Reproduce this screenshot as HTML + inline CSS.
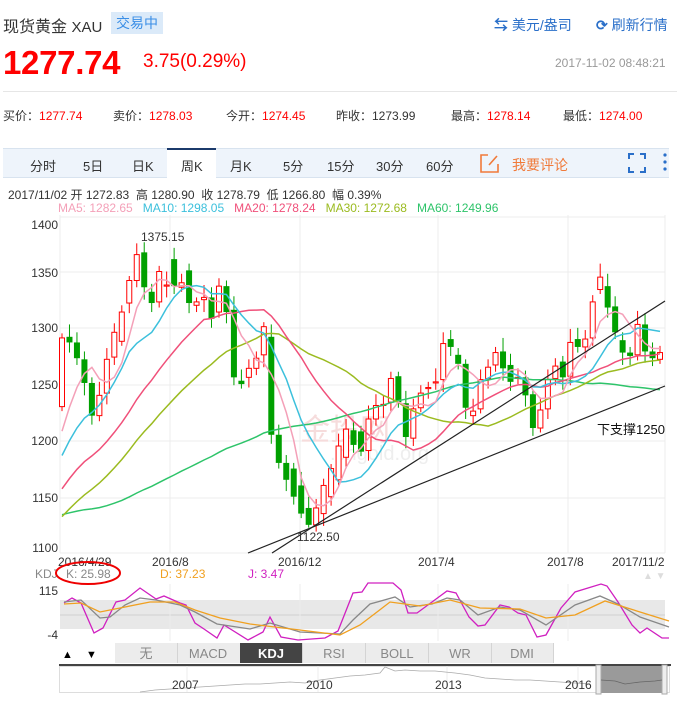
<!DOCTYPE html>
<html><head><meta charset="utf-8">
<style>
*{margin:0;padding:0;box-sizing:border-box}
body{width:680px;height:703px;background:#fff;font-family:"Liberation Sans","Noto Sans CJK SC",sans-serif;position:relative;overflow:hidden;color:#333}
.a{position:absolute;white-space:nowrap}
.r{color:#f00}
</style></head><body>
<div class="a" style="left:3px;top:13px;font-size:16px;color:#333">现货黄金 <span style="font-size:15px">XAU</span></div>
<div class="a" style="left:111px;top:12px;width:52px;height:22px;background:#dbeaf9;color:#3a8ee6;font-size:14px;line-height:22px;text-align:center">交易中</div>
<div class="a" style="left:494px;top:15px;font-size:14px;color:#2a6fc9"><span style="font-weight:bold">⇆</span> 美元/盎司</div>
<div class="a" style="left:596px;top:15px;font-size:14px;color:#2a6fc9"><span style="font-weight:bold">⟳</span> 刷新行情</div>
<div class="a r" style="left:3px;top:44px;font-size:33px;font-weight:bold;letter-spacing:-0.3px">1277.74</div>
<div class="a r" style="left:143px;top:51px;font-size:19px">3.75(0.29%)</div>
<div class="a" style="left:555px;top:56px;font-size:12px;color:#999">2017-11-02 08:48:21</div>
<div class="a" style="left:3px;top:91px;width:674px;height:1px;background:#e6e6e6"></div>
<div class="a" style="left:3px;top:107px;font-size:12px;word-spacing:0">
<span>买价：<span class="r">1277.74</span></span><span style="position:absolute;left:110px">卖价：<span class="r">1278.03</span></span><span style="position:absolute;left:223px">今开：<span class="r">1274.45</span></span><span style="position:absolute;left:333px">昨收：1273.99</span><span style="position:absolute;left:448px">最高：<span class="r">1278.14</span></span><span style="position:absolute;left:560px">最低：<span class="r">1274.00</span></span></div>
<div class="a" style="left:3px;top:148px;width:666px;height:30px;background:#eef4fb;border-top:1px solid #d8e3ef;border-bottom:1px solid #d8e3ef"></div>
<div class="a" style="left:167px;top:148px;width:49px;height:31px;background:#fff;border-top:2px solid #1b3a6b"></div>
<div class="a" style="top:156px;font-size:13px;color:#333;left:0;width:680px;height:20px">
<span class="a" style="left:30px">分时</span><span class="a" style="left:83px">5日</span><span class="a" style="left:132px">日K</span><span class="a" style="left:181px">周K</span><span class="a" style="left:230px">月K</span><span class="a" style="left:283px">5分</span><span class="a" style="left:327px">15分</span><span class="a" style="left:376px">30分</span><span class="a" style="left:426px">60分</span>
<span class="a" style="left:512px;color:#f07a3a;font-size:14px;top:-1px">我要评论</span></div>
<svg class="a" style="left:0;top:0" width="680" height="703">
<g fill="none" stroke="#f07a3a" stroke-width="1.6"><path d="M488 155h-7v17h17v-8"/><path d="M489 165l8-9"/></g>
<g fill="none" stroke="#2a6fc9" stroke-width="2"><path d="M629 159v-5h5M640 154h5v5M645 167v5h-5M634 172h-5v-5"/></g>
<g fill="#2a6fc9"><circle cx="665" cy="155" r="1.6"/><circle cx="665" cy="162" r="1.6"/><circle cx="665" cy="169" r="1.6"/></g>
<g id="grid" stroke="#ececec" stroke-width="1"></g>
<text x="300" y="440" font-size="30" fill="#f6dcdc" font-family="Liberation Sans,Noto Sans CJK SC,sans-serif">金投网</text>
<text x="330" y="460" font-size="20" fill="#eee" font-family="Liberation Sans,sans-serif">.cngold.org</text>
<g id="cd"></g><g id="ma"></g>
<g stroke="#222" stroke-width="1.2"><line x1="272" y1="553" x2="665" y2="301"/><line x1="248" y1="553" x2="665" y2="386"/></g>
<text x="597" y="434" font-size="13" fill="#111" font-family="Liberation Sans,Noto Sans CJK SC,sans-serif">下支撑1250</text>
<text x="141" y="241" font-size="12" fill="#333">1375.15</text>
<text x="297" y="541" font-size="12" fill="#333">1122.50</text>
<g font-size="12" fill="#333" text-anchor="end" font-family="Liberation Sans,sans-serif">
<text x="58" y="229">1400</text><text x="58" y="277">1350</text><text x="58" y="332">1300</text><text x="58" y="389">1250</text><text x="58" y="445">1200</text><text x="58" y="502">1150</text><text x="58" y="552">1100</text></g>
<g font-size="12" fill="#333"><text x="58" y="566">2016/4/29</text><text x="152" y="566">2016/8</text><text x="278" y="566">2016/12</text><text x="418" y="566">2017/4</text><text x="547" y="566">2017/8</text><text x="612" y="566">2017/11/2</text></g>
<g font-size="12"><text x="35" y="578" fill="#888">KDJ</text><text x="66" y="578" fill="#888">K: 25.98</text><text x="160" y="578" fill="#f0a020">D: 37.23</text><text x="248" y="578" fill="#d020c0">J: 3.47</text></g>
<ellipse cx="88" cy="573" rx="32" ry="11" fill="none" stroke="#e00" stroke-width="2"/>
<text x="643" y="579" font-size="10" fill="#ddd">▲ ▼</text>
<rect x="60" y="600" width="605" height="29" fill="#e8e8e8"/>
<line x1="60" y1="615" x2="665" y2="615" stroke="#d0d0d0"/>
<g stroke="#ececec"><line x1="170" y1="584" x2="170" y2="641"/><line x1="300" y1="584" x2="300" y2="641"/><line x1="438" y1="584" x2="438" y2="641"/><line x1="568" y1="584" x2="568" y2="641"/></g>
<g font-size="12" fill="#333" text-anchor="end"><text x="58" y="595">115</text><text x="58" y="639">-4</text></g>
<g fill="none" stroke-width="1.3">
<polyline stroke="#d020c0" points="64,603 72,598 81,603 94,633 103,628 116,602 125,600 140,588 156,599 164,596 180,603 186,605 195,623 204,629 217,638 224,625 248,640 263,632 270,617 281,637 298,640 325,638 338,631 353,593 362,592 368,583 393,583 401,590 408,613 417,613 432,602 447,591 456,593 469,617 478,626 485,625 500,605 509,607 518,613 526,615 537,637 546,635 561,608 575,592 588,588 601,584 607,586 618,602 632,625 640,633 647,628 662,638 669,638"/>
<polyline stroke="#888" points="64,602 81,600 100,618 110,617 125,605 140,598 156,600 180,605 195,612 217,624 250,629 270,623 300,632 340,634 353,620 370,604 395,597 410,607 432,604 447,598 460,600 478,615 500,607 520,610 546,625 575,605 600,596 618,604 640,617 669,627"/>
<polyline stroke="#f0a020" points="64,604 81,603 100,612 125,607 150,602 175,602 195,610 220,618 250,624 300,630 340,635 360,625 390,602 420,606 450,600 480,608 520,609 546,618 575,615 605,601 640,612 669,621"/>
</g>
<rect x="59" y="643" width="13" height="20" fill="#fff"/>
<text x="62" y="658" font-size="11" fill="#000">▲</text><text x="86" y="658" font-size="11" fill="#000">▼</text>
<g font-size="13" text-anchor="middle" font-family="Liberation Sans,Noto Sans CJK SC,sans-serif">
<rect x="115" y="643" width="438" height="20" fill="#ececec"/>
<g stroke="#d4d4d4"><line x1="177.5" y1="643" x2="177.5" y2="663"/><line x1="302.5" y1="643" x2="302.5" y2="663"/><line x1="365.5" y1="643" x2="365.5" y2="663"/><line x1="428.5" y1="643" x2="428.5" y2="663"/><line x1="491.5" y1="643" x2="491.5" y2="663"/><line x1="553.5" y1="643" x2="553.5" y2="663"/></g>
<rect x="240" y="643" width="62" height="20" fill="#444"/>
<text x="146" y="658" fill="#888">无</text><text x="208" y="658" fill="#888">MACD</text><text x="271" y="658" fill="#fff" font-weight="bold">KDJ</text><text x="334" y="658" fill="#888">RSI</text><text x="397" y="658" fill="#888">BOLL</text><text x="460" y="658" fill="#888">WR</text><text x="522" y="658" fill="#888">DMI</text></g>
<rect x="59" y="664" width="612" height="2" fill="#444"/>
<rect x="59.5" y="666.5" width="610" height="26" fill="none" stroke="#ddd"/>
<g stroke="#ececec"><line x1="187" y1="666" x2="187" y2="692"/><line x1="318" y1="666" x2="318" y2="692"/><line x1="447" y1="666" x2="447" y2="692"/><line x1="578" y1="666" x2="578" y2="692"/></g>
<polyline fill="none" stroke="#aaa" stroke-width="0.8" points="140,692 155,690 170,689 185,688 200,687 215,686 230,685 245,684 260,684 275,683 290,682 305,683 320,680 335,678 350,676 365,675 380,673 385,667 395,671 405,670 420,671 435,671 445,672 455,673 470,675 485,678 500,679 515,680 530,680 545,681 560,682 575,683 590,684"/>
<rect x="600" y="666" width="63" height="27" fill="#9a9a9a"/>
<rect x="596" y="665" width="5" height="29" fill="#eee" stroke="#aaa"/><rect x="662" y="665" width="5" height="29" fill="#eee" stroke="#aaa"/>
<polyline fill="none" stroke="#666" stroke-width="0.8" points="601,680 615,681 625,684 640,682 655,681 662,680"/>
<g font-size="12" fill="#333"><text x="172" y="689">2007</text><text x="306" y="689">2010</text><text x="435" y="689">2013</text><text x="565" y="689">2016</text></g>
</svg>
<div class="a" style="left:8px;top:186px;font-size:12px;color:#333">2017/11/02 开 1272.83 &nbsp;高 1280.90 &nbsp;收 1278.79 &nbsp;低 1266.80 &nbsp;幅 0.39%</div>
<div class="a" style="left:58px;top:201px;font-size:12px"><span style="color:#f4a0b8">MA5: 1282.65</span> &nbsp;&nbsp;<span style="color:#3cc0dc">MA10: 1298.05</span> &nbsp;&nbsp;<span style="color:#f0507a">MA20: 1278.24</span> &nbsp;&nbsp;<span style="color:#9bbb20">MA30: 1272.68</span> &nbsp;&nbsp;<span style="color:#2ec46a">MA60: 1249.96</span></div>
<script>
var O=[1230,1292,1287,1272,1251,1222,1242,1274,1288,1322,1342,1367,1332,1323,1337,1361,1336,1351,1320,1325,1327,1314,1337,1316,1253,1256,1264,1276,1292,1205,1180,1175,1160,1140,1125,1135,1150,1165,1185,1209,1208,1191,1219,1231,1234,1257,1233,1202,1229,1246,1251,1254,1290,1276,1268,1222,1228,1255,1267,1279,1267,1255,1256,1241,1211,1228,1255,1270,1257,1290,1283,1291,1334,1337,1319,1289,1278,1276,1303,1279,1272];
var C=[1291,1287,1273,1251,1222,1240,1272,1296,1314,1342,1365,1336,1322,1350,1338,1337,1340,1322,1323,1327,1308,1337,1314,1256,1250,1264,1273,1301,1205,1180,1165,1150,1135,1125,1140,1160,1175,1195,1210,1196,1190,1219,1231,1232,1255,1234,1203,1228,1242,1247,1252,1286,1283,1268,1229,1226,1254,1265,1278,1264,1252,1256,1240,1211,1227,1254,1266,1256,1287,1283,1290,1323,1345,1318,1296,1278,1275,1303,1279,1273,1278];
var n=Math.min(O.length,C.length);
function Y(p){return 553-(p-1100)*1.126}
var s='',g='';
[217,272,328,385,441,498,553].forEach(function(y){g+='<line x1="60" y1="'+y+'" x2="665" y2="'+y+'"/>'});
[170,300,438,568].forEach(function(x){g+='<line x1="'+x+'" y1="215" x2="'+x+'" y2="553"/>'});
g+='<line x1="60" y1="215" x2="60" y2="553"/><line x1="665" y1="215" x2="665" y2="553"/>';
document.getElementById('grid').innerHTML=g;
for(var i=0;i<n;i++){
 var x=62+i*(598/(n-1)),o=O[i],c=C[i],up=c>=o;
 var hi=Math.max(o,c)+4+((i*7)%9),lo=Math.min(o,c)-4-((i*5)%8);
 if(i==10)hi=1375;if(i==33)lo=1122.5;if(i==72)hi=1357;
 var col=up?'#f00':'#00a000';
 s+='<line x1="'+x+'" y1="'+Y(hi)+'" x2="'+x+'" y2="'+Y(lo)+'" stroke="'+col+'"/>';
 var t=Y(Math.max(o,c)),h=Math.max(1,Y(Math.min(o,c))-t);
 if(up)s+='<rect x="'+(x-2.5)+'" y="'+t+'" width="5" height="'+h+'" fill="#fff" stroke="#f00"/>';
 else s+='<rect x="'+(x-3)+'" y="'+t+'" width="6" height="'+h+'" fill="#00a000"/>';
}
document.getElementById('cd').innerHTML=s;
var pad=[];for(var k=0;k<60;k++){pad.push(k<35?1190-k*3.5:1075+(k-35)*5)}
var all=pad.concat(C.slice(0,n));
function ma(L,col){var pts=[];for(var i=0;i<n;i++){var j=i+60,sm=0;for(var q=0;q<L;q++)sm+=all[j-q];pts.push((62+i*(598/(n-1))).toFixed(1)+','+Y(sm/L).toFixed(1))}return '<polyline fill="none" stroke="'+col+'" stroke-width="1.5" points="'+pts.join(' ')+'"/>'}
document.getElementById('ma').innerHTML=ma(60,'#2ec46a')+ma(30,'#9bbb20')+ma(20,'#f0507a')+ma(10,'#3cc0dc')+ma(5,'#f4a0b8');
</script>
</body></html>
